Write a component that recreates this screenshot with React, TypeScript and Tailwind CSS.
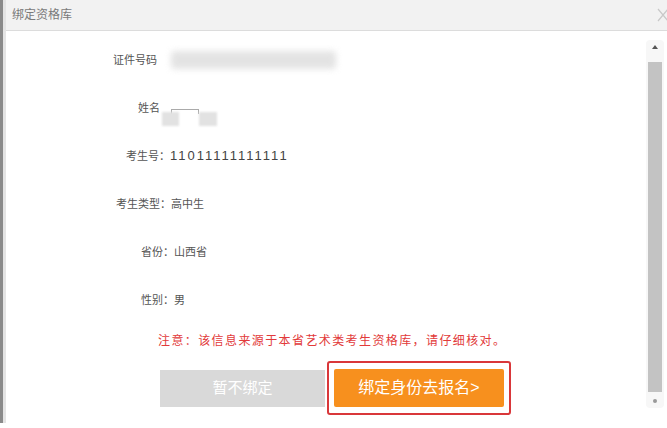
const rows = [
  { label: "考生类型：", value: "高中生", pad: "pl-[110px]" },
  { label: "省份：", value: "山西省", pad: "pl-[135px]" },
  { label: "性别：", value: "男", pad: "pl-[135px]" },
];

function Scrollbar() {
  return (
    <div className="w-[22px] flex flex-col items-center pt-[9px] pr-[3px]">
      <div className="w-[18px] h-[368px] flex flex-col items-center bg-[#f7f7f7] rounded-sm">
        <div className="h-[14px] flex items-center justify-center">
          <div className="w-0 h-0 border-l-[3px] border-r-[3px] border-b-[4px] border-l-transparent border-r-transparent border-b-[#555]" />
        </div>
        <div className="w-[14px] h-[331px] bg-[#c3c3c3] mt-[8px]" />
        <div className="h-[14px] flex items-center justify-center mt-[2px]">
          <div className="w-[4px] h-[4px] rounded-full bg-[#999]" />
        </div>
      </div>
    </div>
  );
}

export default function App() {
  return (
    <div
      className="w-[667px] h-[428px] bg-white flex overflow-hidden"
      style={{ fontFamily: '"Liberation Sans", "Noto Sans CJK SC", sans-serif' }}
    >
      <div className="w-[3px] h-[423px] bg-[#8a8a8a] shrink-0" />
      <div className="w-[3px] h-[423px] bg-[#e4e4e4] shrink-0" />
      <div className="flex-1 flex flex-col">
        {/* title bar */}
        <div className="h-[31px] bg-[#f2f2f2] border-b border-[#dcdcdc] flex items-center justify-between pl-[6px] shrink-0">
          <span className="text-[12px] text-[#7a7a7a]">绑定资格库</span>
          <svg width="12" height="14" viewBox="0 0 12 14" className="-mr-[1px]">
            <path d="M2 1 L12 13 M12 1 L2 13" stroke="#c8c8c8" strokeWidth="1.2" fill="none" />
          </svg>
        </div>

        <div className="flex-1 flex">
          <div className="flex-1 flex flex-col pt-[5px] text-[11px] text-[#555]">
            <div className="h-[48px] flex items-center pl-[107px]">
              <span>证件号码</span>
              <div className="ml-[14px] w-[165px] h-[18px] rounded bg-[#d8d8d8] blur-[3px] opacity-70" />
            </div>

            <div className="h-[48px] flex items-center pl-[132px]">
              <span>姓名</span>
              <div className="relative ml-[2px] mt-[22px] w-[56px] h-[24px]">
                <div className="absolute left-[9px] top-[2px] w-[28px] h-[5px] border-t border-l border-r border-[#aaa]" />
                <div className="absolute left-0 top-[5px] w-[17px] h-[14px] bg-[#e2e2e2] blur-[1px]" />
                <div className="absolute left-[37px] top-[5px] w-[18px] h-[14px] bg-[#e2e2e2] blur-[1px]" />
              </div>
            </div>

            <div className="h-[48px] flex items-center pl-[120px]">
              <span>考生号：</span>
              <span className="text-[13px] tracking-[2px] text-[#444]">11011111111111</span>
            </div>

            {rows.map((r) => (
              <div key={r.label} className={`h-[48px] flex items-center ${r.pad}`}>
                <span>{r.label}</span>
                <span>{r.value}</span>
              </div>
            ))}

            <div className="h-[20px] mt-[7px] flex items-center pl-[152px] text-[12px] tracking-[1.4px] text-[#e23a3a]">
              注意：该信息来源于本省艺术类考生资格库，请仔细核对。
            </div>

            <div className="mt-[10px] flex items-center pl-[154px]">
              <button className="w-[165px] h-[37px] bg-[#d9d9d9] text-white text-[15px]">
                暂不绑定
              </button>
              <div className="ml-[2px] border-2 border-[#d9373a] rounded-[3px] px-[5px] py-[6px]">
                <button className="w-[170px] h-[38px] bg-[#f7901e] text-white text-[16px] rounded-[2px]">
                  绑定身份去报名&gt;
                </button>
              </div>
            </div>
          </div>
          <Scrollbar />
        </div>
      </div>
    </div>
  );
}
